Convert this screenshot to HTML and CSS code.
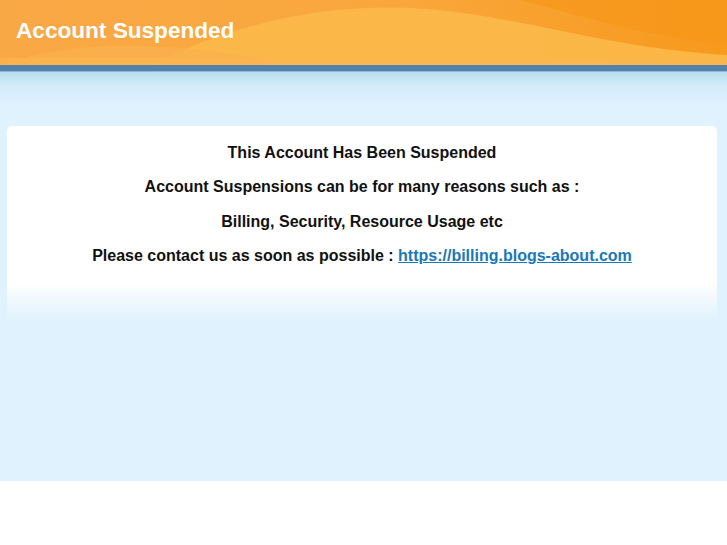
FILE: index.html
```html
<!DOCTYPE html>
<html lang="en">
<head>
    <meta charset="UTF-8">
    <meta name="viewport" content="width=device-width, initial-scale=1.0">
    <title>Account Suspended</title>
    <link rel="stylesheet" href="styles.css">
</head>
<body>
    <div class="page">
        <div class="header">
            <svg class="waves" viewBox="0 0 727 65" preserveAspectRatio="none">
                <defs>
                    <linearGradient id="base" x1="0" y1="0" x2="1" y2="0">
                        <stop offset="0" stop-color="#f9a846"/>
                        <stop offset="0.55" stop-color="#f9a73c"/>
                        <stop offset="1" stop-color="#f7991c"/>
                    </linearGradient>
                </defs>
                <rect width="727" height="65" fill="url(#base)"/>
                <path d="M520,0 C590,18 650,38 727,44 L727,0 Z" fill="#f7971a" opacity="0.7"/>
                <path d="M150,65 C230,25 320,4 410,8 C510,12 600,48 727,55 L727,65 Z" fill="#fbbb4b" opacity="0.85"/>
                <path d="M0,65 C60,44 140,38 260,58 L270,65 Z" fill="#fab04e" opacity="0.8"/>
                <rect y="58" width="727" height="7" fill="#fbb650" opacity="0.6"/>
            </svg>
            <h1>Account Suspended</h1>
        </div>
        <div class="stripe"></div>
        <div class="content">
            <div class="card">
                <p>This Account Has Been Suspended</p>
                <p>Account Suspensions can be for many reasons such as :</p>
                <p>Billing, Security, Resource Usage etc</p>
                <p>Please contact us as soon as possible : <a href="#">https://billing.blogs-about.com</a></p>
            </div>
        </div>
    </div>
</body>
</html>
```

FILE: styles.css
```css
body {
    margin: 0;
    font-family: "Liberation Sans", Arial, sans-serif;
    background-color: white;
    color: #111;
}

.page {
    height: 481px;
    background-color: #dff2fd;
}

.header {
    position: relative;
    height: 65px;
    overflow: hidden;
}

.waves {
    position: absolute;
    top: 0;
    left: 0;
    width: 100%;
    height: 100%;
}

.header h1 {
    position: relative;
    margin: 0;
    padding: 18px 0 0 16px;
    font-size: 22.6px;
    line-height: 26px;
    color: white;
}

.stripe {
    height: 6px;
    background-color: #5281ab;
    border-bottom: 1px solid #8fb6d2;
}

.content {
    padding: 54px 10px 0 7px;
    background: linear-gradient(#b7def0 0px, #d3ecf9 14px, #dff2fd 32px, #dff2fd 100%);
}

.card {
    padding: 2px 0 40px;
    border-radius: 5px 5px 0 0;
    text-align: center;
    font-size: 16px;
    line-height: 18.4px;
    font-weight: bold;
    background: linear-gradient(#fff 0px, #fff 158px, #f1f9fe 172px, #dff2fd 196px);
}

.card p {
    margin: 16px 0;
}

.card a {
    color: #1a78b8;
}
```
